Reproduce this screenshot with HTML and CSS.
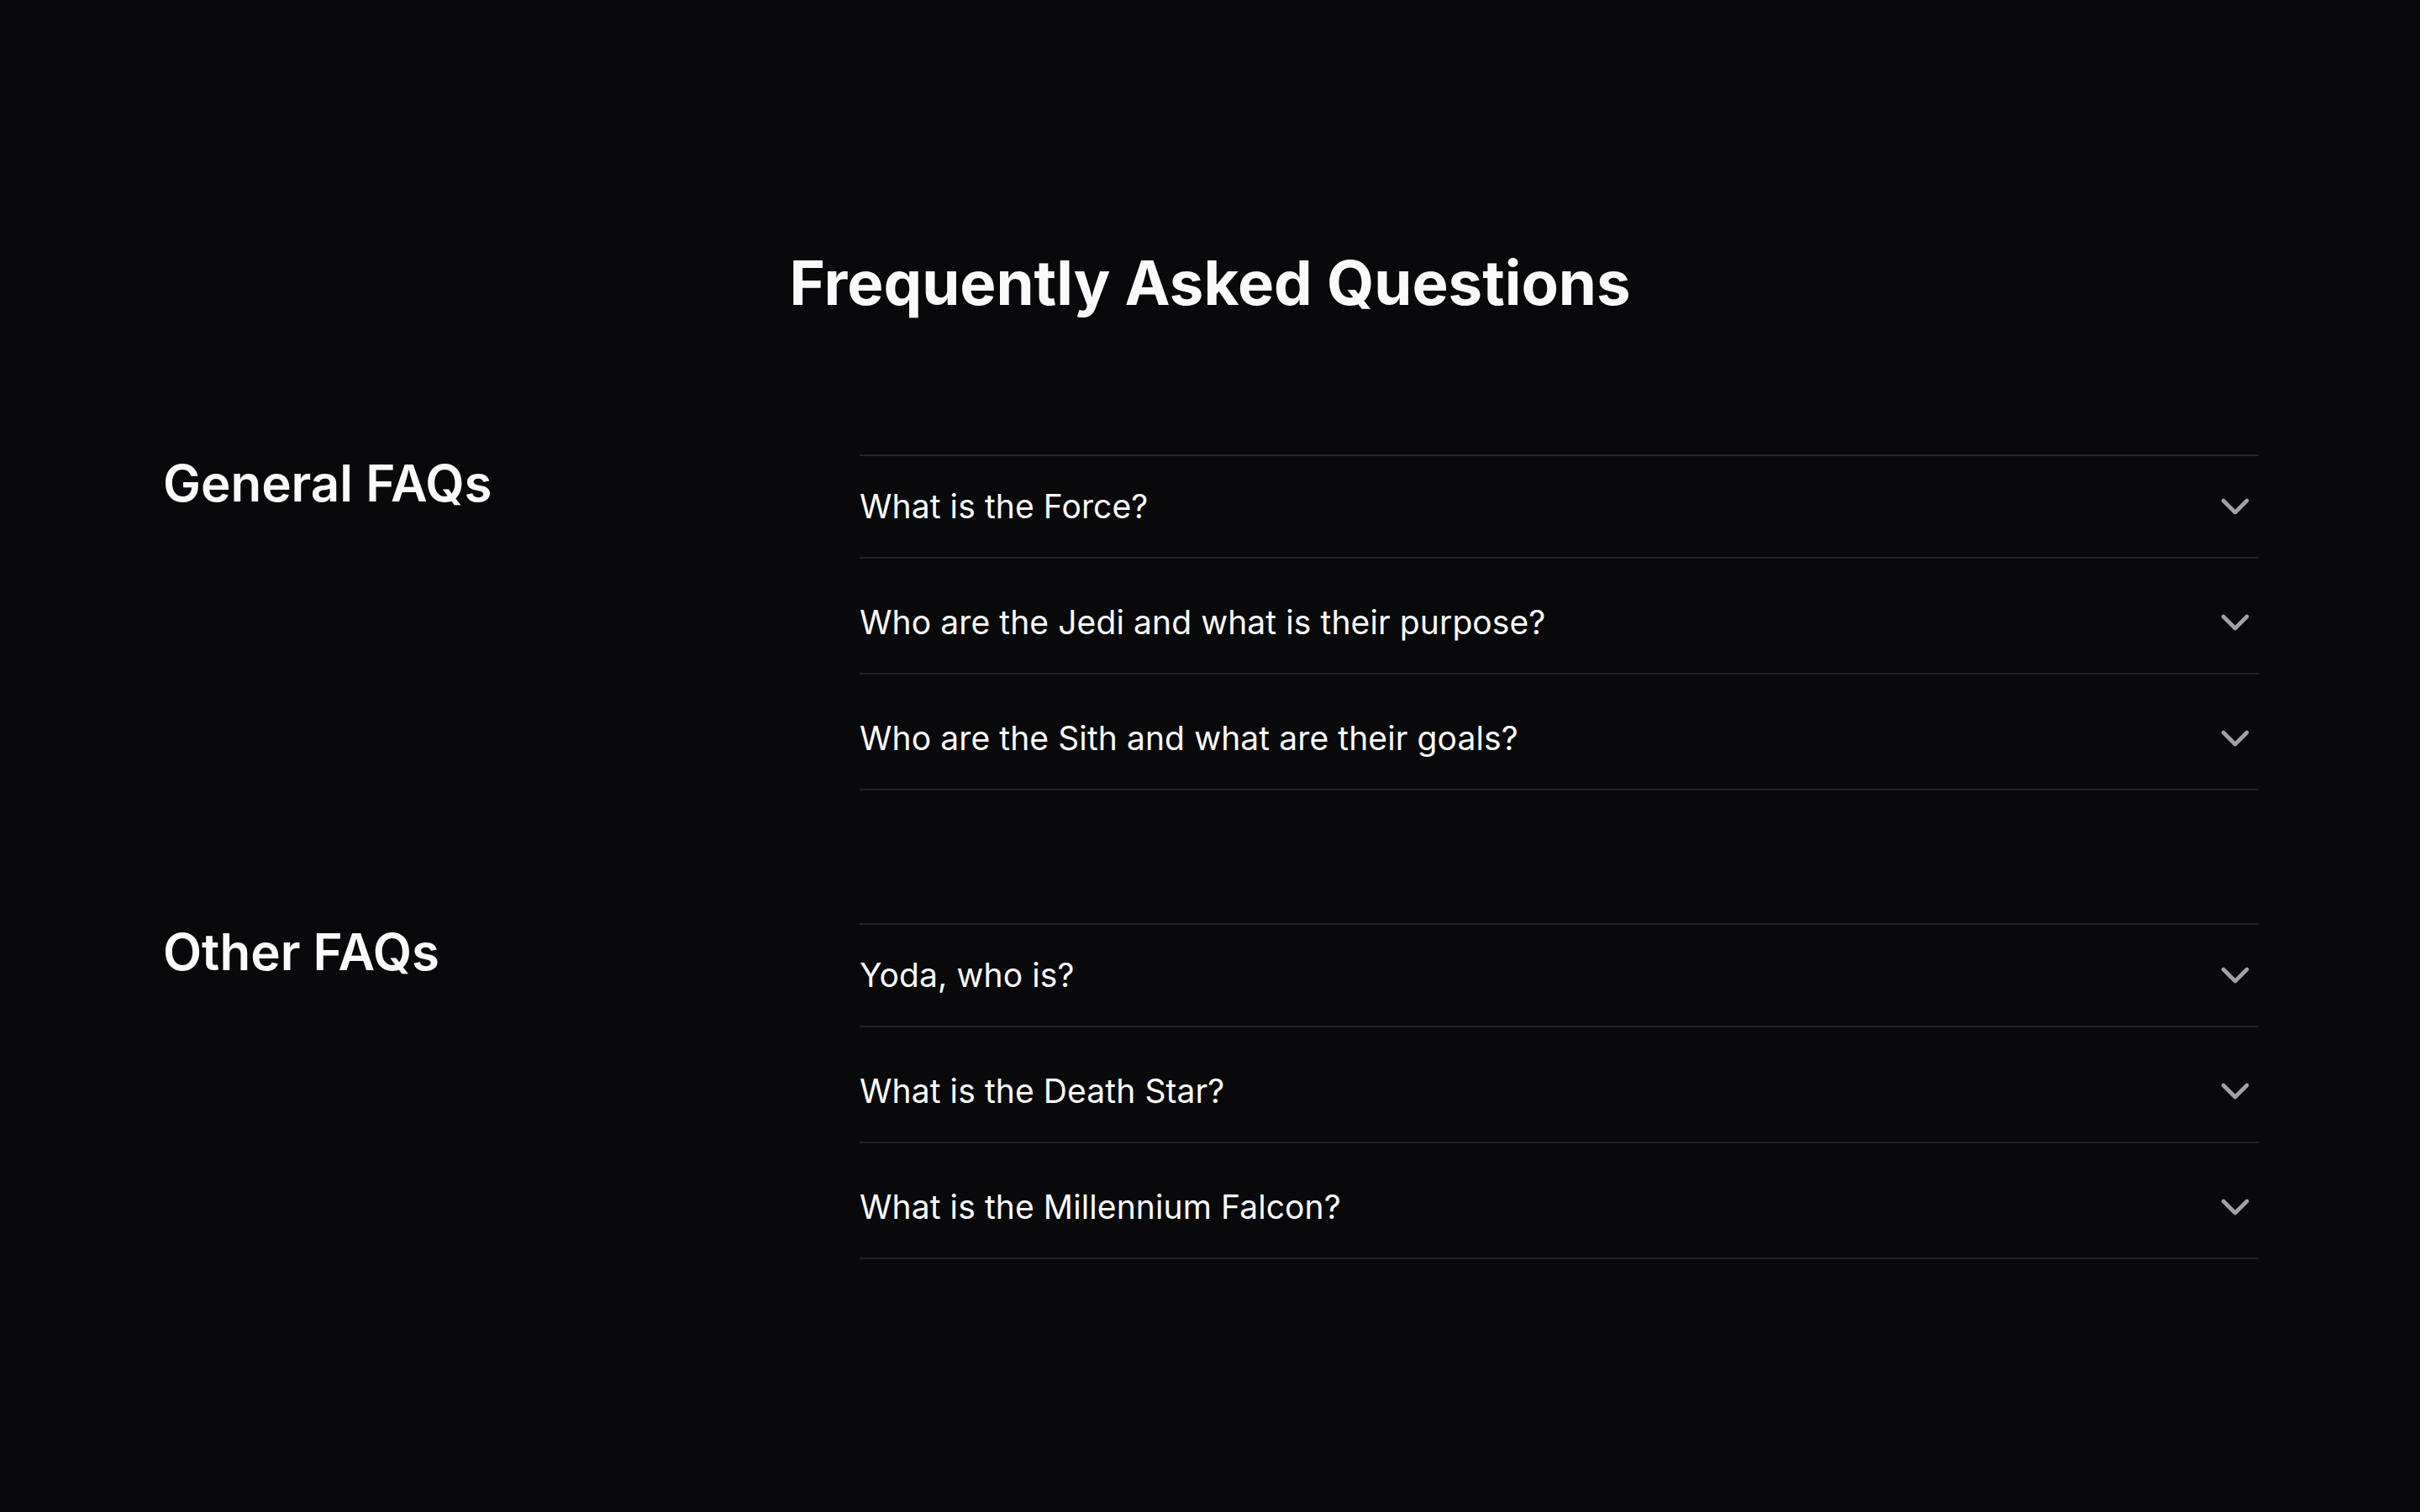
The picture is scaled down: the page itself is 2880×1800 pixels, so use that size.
FILE: index.html
```html
<!DOCTYPE html>
<html lang="en">
<head>
<meta charset="utf-8">
<title>Frequently Asked Questions</title>
<link rel="stylesheet" href="styles.css">
</head>
<body>
<main class="page">
  <h1 class="title">Frequently Asked Questions</h1>

  <section class="faq-section">
    <h2 class="section-title">General FAQs</h2>
    <div class="faq-list">
      <div class="faq-item">
        <button class="faq-trigger"><span>What is the Force?</span>
          <svg class="chev" viewBox="0 0 24 24" fill="none" stroke="currentColor" stroke-width="2" stroke-linecap="round" stroke-linejoin="round"><path d="m6 9 6 6 6-6"/></svg>
        </button>
      </div>
      <div class="faq-item">
        <button class="faq-trigger"><span>Who are the Jedi and what is their purpose?</span>
          <svg class="chev" viewBox="0 0 24 24" fill="none" stroke="currentColor" stroke-width="2" stroke-linecap="round" stroke-linejoin="round"><path d="m6 9 6 6 6-6"/></svg>
        </button>
      </div>
      <div class="faq-item">
        <button class="faq-trigger"><span>Who are the Sith and what are their goals?</span>
          <svg class="chev" viewBox="0 0 24 24" fill="none" stroke="currentColor" stroke-width="2" stroke-linecap="round" stroke-linejoin="round"><path d="m6 9 6 6 6-6"/></svg>
        </button>
      </div>
    </div>
  </section>

  <section class="faq-section">
    <h2 class="section-title">Other FAQs</h2>
    <div class="faq-list">
      <div class="faq-item">
        <button class="faq-trigger"><span>Yoda, who is?</span>
          <svg class="chev" viewBox="0 0 24 24" fill="none" stroke="currentColor" stroke-width="2" stroke-linecap="round" stroke-linejoin="round"><path d="m6 9 6 6 6-6"/></svg>
        </button>
      </div>
      <div class="faq-item">
        <button class="faq-trigger"><span>What is the Death Star?</span>
          <svg class="chev" viewBox="0 0 24 24" fill="none" stroke="currentColor" stroke-width="2" stroke-linecap="round" stroke-linejoin="round"><path d="m6 9 6 6 6-6"/></svg>
        </button>
      </div>
      <div class="faq-item">
        <button class="faq-trigger"><span>What is the Millennium Falcon?</span>
          <svg class="chev" viewBox="0 0 24 24" fill="none" stroke="currentColor" stroke-width="2" stroke-linecap="round" stroke-linejoin="round"><path d="m6 9 6 6 6-6"/></svg>
        </button>
      </div>
    </div>
  </section>
</main>
</body>
</html>
```

FILE: styles.css
```css
* { box-sizing: border-box; }

html, body {
  margin: 0;
  background: #09090b;
}

body {
  font-family: Inter, "Noto Sans", "Liberation Sans", sans-serif;
  color: #fafafa;
  min-height: 1800px;
}

.page {
  width: 2496px;
  margin: 0 auto;
  padding-top: 294px;
  display: flex;
  flex-direction: column;
}

.title {
  margin: 0 0 161px;
  text-align: center;
  font-size: 72.5px;
  line-height: 86px;
  font-weight: 700;
  letter-spacing: 0;
}

.faq-section {
  display: grid;
  grid-template-columns: 831px 1fr;
  align-items: start;
}

.faq-section + .faq-section {
  margin-top: 158px;
}

.section-title {
  margin: 0;
  padding: 4px 0 0 2px;
  font-size: 60px;
  line-height: 60px;
  font-weight: 600;
  letter-spacing: 0;
}

.faq-list {
  border-top: 2px solid #232326;
}

.faq-item {
  border-bottom: 2px solid #232326;
}

.faq-item + .faq-item {
  margin-top: 16px;
}

.faq-trigger {
  width: 100%;
  display: flex;
  align-items: center;
  justify-content: space-between;
  padding: 32px 0 32px;
  margin: 0;
  border: 0;
  background: none;
  color: #fafafa;
  font-family: inherit;
  font-size: 39px;
  line-height: 56px;
  font-weight: 400;
  text-align: left;
  letter-spacing: 0.1px;
  cursor: pointer;
}

.chev {
  width: 56px;
  height: 56px;
  color: #a1a1aa;
  flex: none;
}
```
